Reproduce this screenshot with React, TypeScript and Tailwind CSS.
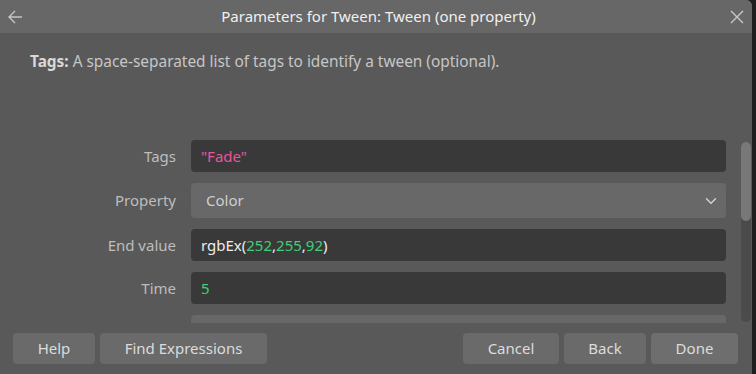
import { ChevronDown } from 'lucide-react';

const font = { fontFamily: "'Noto Sans', 'Open Sans', sans-serif" };

function Label({ children }: { children?: React.ReactNode }) {
  return <div className="flex items-center justify-end text-[15px] text-[#bdbdbd]">{children}</div>;
}

export default function App() {
  return (
    <div className="w-[756px] h-[374px] bg-[#1f1f1f] overflow-hidden" style={font}>
      <div className="w-[752px] h-[374px] flex flex-col bg-[#595959] rounded-tr-[6px] overflow-hidden">
        {/* Title bar */}
        <div className="h-[33px] shrink-0 bg-[#676767] flex items-center px-[7px]">
          <svg width="16" height="16" viewBox="0 0 16 16" className="text-[#c4c4c4]">
            <path d="M15 8H2M8 2L2 8l6 6" stroke="currentColor" strokeWidth="1.4" fill="none" />
          </svg>
          <div className="flex-1 text-center text-[15px] text-[#f0f0f0] pl-[4px]">
            Parameters for Tween: Tween (one property)
          </div>
          <svg width="14" height="14" viewBox="0 0 14 14" className="text-[#c8c8c8] mr-[1px]">
            <path d="M1 1l12 12M13 1L1 13" stroke="currentColor" strokeWidth="1.4" fill="none" />
          </svg>
        </div>

        {/* Description */}
        <div className="h-[107px] shrink-0 pl-[30px] pt-[17px] text-[15.4px] text-[#c6c6c6]">
          <span className="font-bold text-[#d8d8d8]">Tags:</span> A space-separated list of tags to identify a tween (optional).
        </div>

        {/* Scroll area */}
        <div className="h-[183px] shrink-0 flex overflow-hidden">
          <div className="flex-1 grid grid-cols-[176px_1fr] gap-x-[15px] gap-y-[11px] content-start">
            <Label>Tags</Label>
            <div className="h-[32px] rounded-[4px] bg-[#393939] flex items-center px-[10px] text-[15px] text-[#e8559d]">
              "Fade"
            </div>
            <Label>Property</Label>
            <div className="h-[35px] rounded-[4px] bg-[#686868] flex items-center pl-[15px] pr-[6px] text-[15px] text-[#cfcfcf]">
              <span className="flex-1">Color</span>
              <ChevronDown size={18} strokeWidth={2} className="text-[#cfcfcf]" />
            </div>
            <Label>End value</Label>
            <div className="h-[32px] rounded-[4px] bg-[#393939] flex items-center px-[10px] text-[15px] text-[#ececec]">
              rgbEx(<span className="text-[#3fcf78]">252</span>,<span className="text-[#3fcf78]">255</span>,<span className="text-[#3fcf78]">92</span>)
            </div>
            <Label>Time</Label>
            <div className="h-[32px] rounded-[4px] bg-[#393939] flex items-center px-[10px] text-[15px] text-[#3fcf78]">
              5
            </div>
            <Label />
            <div className="h-[32px] rounded-[4px] bg-[#686868]" />
          </div>
          <div className="w-[10px] ml-[15px] mr-[1px] mt-[2px] mb-[1px] rounded-full bg-[#4b4b4b] flex flex-col">
            <div className="h-[79px] rounded-full bg-[#787878]" />
          </div>
        </div>

        {/* Footer */}
        <div className="flex-1 flex items-start pt-[10px] pl-[13px] pr-[14px] gap-[5px] text-[15px] text-[#dcdcdc]">
          <button className="w-[82px] h-[31px] rounded-[4px] bg-[#6a6a6a]">Help</button>
          <button className="w-[167px] h-[31px] rounded-[4px] bg-[#6a6a6a]">Find Expressions</button>
          <div className="flex-1" />
          <button className="w-[96px] h-[31px] rounded-[4px] bg-[#6a6a6a]">Cancel</button>
          <button className="w-[82px] h-[31px] rounded-[4px] bg-[#6a6a6a]">Back</button>
          <button className="w-[87px] h-[31px] rounded-[4px] bg-[#6e6e6e]">Done</button>
        </div>
      </div>
    </div>
  );
}
